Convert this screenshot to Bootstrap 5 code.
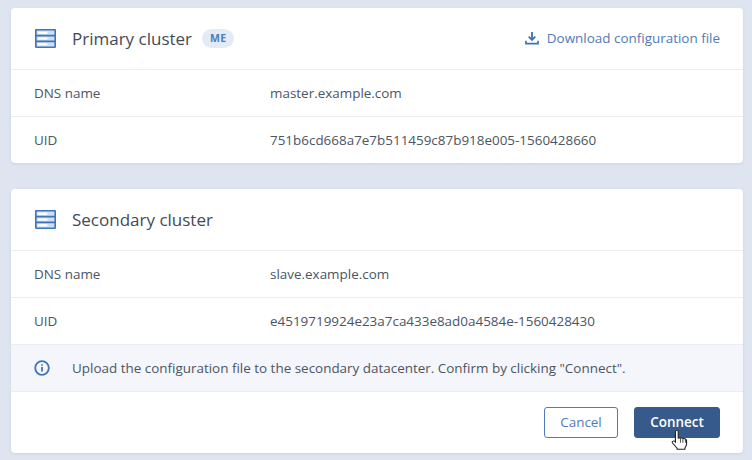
<!DOCTYPE html>
<html lang="en">
<head>
<meta charset="utf-8">
<title>Clusters</title>
<link href="https://cdn.jsdelivr.net/npm/bootstrap@5.3.0/dist/css/bootstrap.min.css" rel="stylesheet">
<style>
html,body{height:460px;overflow:hidden}
body{background:#dfe5f0;font-family:"Open Sans","Noto Sans",sans-serif;font-size:13.45px;color:#4b5563}
.pane{width:732px;margin-left:11px;border:0;border-radius:4px;background:#fff;box-shadow:0 1px 3px rgba(80,100,140,.15);overflow:hidden}
.first{margin-top:8px;margin-bottom:26px}
.head{height:62px;padding:0 23px 0 24px;border-bottom:1px solid #e9ecf1}
.head svg.srv{width:21px;height:19px;flex:none;margin-right:16px}
.ttl{font-size:17px;color:#434a57}
.me{font-size:10.500px;font-weight:700;color:#4f7bb8;background:#e3ebf6;border-radius:10px;height:19px;line-height:19px;padding:0 8px;margin-left:10px;letter-spacing:.3px}
.dl{color:#4f7bb8;font-size:13.450px;text-decoration:none}
.dl svg{width:14px;height:14px;margin-right:8px}
.line{height:47px;padding:0 23px;border-bottom:1px solid #e9ecf1;color:#4b5563}
.line:last-child{border-bottom:0;height:46px}
.key{width:236px;flex:none}
.note{height:47px;padding:0 23px;background:#f4f6fb;border-bottom:1px solid #e9ecf1}
.note svg{width:16px;height:16px;flex:none;margin-right:22px}
.foot{height:61px;padding:0 23px;position:relative}
.bt{height:31px;font-size:13.450px;border-radius:3px;padding:0;line-height:1}
.bt-c{width:74px;border:1px solid #4f7bb8;color:#4f7bb8;background:#fff;margin-right:16px}
.bt-p{width:86px;border:1px solid #375a8c;background:#375a8c;color:#fff;font-weight:600}
.cursor{position:absolute;left:660px;top:37px;width:20px;height:22px}
</style>
</head>
<body>
<div class="card pane first">
  <div class="head d-flex align-items-center">
    <svg class="srv" viewBox="0 0 22 20"><rect x=".75" y=".75" width="20.5" height="18.5" rx="1" fill="#cfe0f4" stroke="#3f74b8" stroke-width="1.8"/><path d="M1 7h20M1 13h20" stroke="#3f74b8" stroke-width="1.8"/><path d="M3 4h10M3 10h10M3 16h10" stroke="#fff" stroke-width="2"/></svg>
    <span class="ttl">Primary cluster</span><span class="me">ME</span>
    <a class="dl ms-auto d-flex align-items-center" href="#"><svg viewBox="0 0 15 15"><path d="M7.5 1v8M4 6l3.5 3.5L11 6" fill="none" stroke="#3f74b8" stroke-width="2"/><path d="M1 10.500v3h13v-3" fill="none" stroke="#3f74b8" stroke-width="1.800"/></svg>Download configuration file</a>
  </div>
  <div class="line d-flex align-items-center"><span class="key">DNS name</span><span>master.example.com</span></div>
  <div class="line d-flex align-items-center"><span class="key">UID</span><span>751b6cd668a7e7b511459c87b918e005-1560428660</span></div>
</div>
<div class="card pane">
  <div class="head d-flex align-items-center">
    <svg class="srv" viewBox="0 0 22 20"><rect x=".75" y=".75" width="20.5" height="18.5" rx="1" fill="#cfe0f4" stroke="#3f74b8" stroke-width="1.8"/><path d="M1 7h20M1 13h20" stroke="#3f74b8" stroke-width="1.8"/><path d="M3 4h10M3 10h10M3 16h10" stroke="#fff" stroke-width="2"/></svg>
    <span class="ttl">Secondary cluster</span>
  </div>
  <div class="line d-flex align-items-center"><span class="key">DNS name</span><span>slave.example.com</span></div>
  <div class="line d-flex align-items-center"><span class="key">UID</span><span>e4519719924e23a7ca433e8ad0a4584e-1560428430</span></div>
  <div class="note d-flex align-items-center">
    <svg viewBox="0 0 16 16"><circle cx="8" cy="8" r="6.800" fill="none" stroke="#3f74b8" stroke-width="1.800"/><path d="M8 7v4.500M8 4.300v1.500" stroke="#3f74b8" stroke-width="1.800"/></svg>
    <span>Upload the configuration file to the secondary datacenter. Confirm by clicking "Connect".</span>
  </div>
  <div class="foot d-flex align-items-center justify-content-end">
    <button type="button" class="btn bt bt-c">Cancel</button>
    <button type="button" class="btn bt bt-p">Connect</button>
    <svg class="cursor" viewBox="0 0 18 24" preserveAspectRatio="none"><path d="M5 1.500c1 0 1.500.7 1.500 1.500v7l1-.2 1 .1 1 .1 1 .1 1 .2 1 .3c1 .4 1.500 1 1.500 2v3.500c0 1.500-.5 3-1.500 4.500v1.500H5.500V21c-1-1.500-2.500-3.500-4-5.500-.7-1-.5-2 .3-2.300.7-.3 1.500 0 2.200 1V3c0-.8.400-1.500 1-1.500z" fill="#fff" stroke="#222" stroke-width="1"/><path d="M8.500 10v5M10.700 10.500V15M13 11v4" stroke="#222" stroke-width=".8"/></svg>
  </div>
</div>
<script src="https://cdn.jsdelivr.net/npm/bootstrap@5.3.0/dist/js/bootstrap.bundle.min.js"></script>
</body>
</html>
